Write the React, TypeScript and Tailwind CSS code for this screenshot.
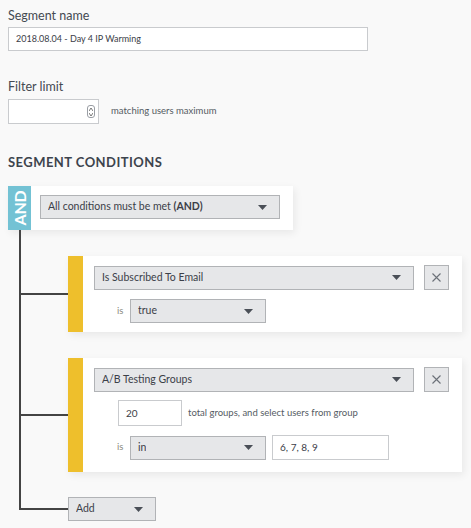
import React from 'react';

const font = { fontFamily: 'Lato, "Open Sans", sans-serif' };

const Caret: React.FC = () => (
  <svg width="9" height="5" viewBox="0 0 9 5" className="shrink-0">
    <path d="M0 0h9L4.5 5z" fill="#4a4f57" />
  </svg>
);

interface SelectProps {
  value: React.ReactNode;
  className?: string;
}

const Select: React.FC<SelectProps> = ({ value, className = '' }) => (
  <div
    className={`flex items-center justify-between h-[24px] bg-[#e6e7e9] border border-[#b1b3b6] pl-[7px] pr-[12px] text-[10.5px] text-[#3b4048] ${className}`}
  >
    <span className="truncate">{value}</span>
    <Caret />
  </div>
);

const RemoveButton: React.FC = () => (
  <div className="w-[25px] h-[25px] flex items-center justify-center bg-[#e6e7e9] border border-[#b1b3b6] shrink-0">
    <svg width="9" height="9" viewBox="0 0 9 9">
      <path d="M0.5 0.5l8 8M8.5 0.5l-8 8" stroke="#6b7078" strokeWidth="1.1" />
    </svg>
  </div>
);

const Connector: React.FC = () => <div className="w-[47px] h-[2px] bg-[#444] self-center shrink-0" />;

const ConditionCard: React.FC<{ children: React.ReactNode; h: string }> = ({ children, h }) => (
  <div className={`flex w-[394px] ${h} bg-white shadow-[2px_3px_8px_rgba(0,0,0,0.07)]`}>
    <div className="w-[15px] bg-[#eebf2c] shrink-0" />
    <div className="flex-1 pl-[11px] pr-[13px] pt-[9px]">{children}</div>
  </div>
);

export default function App() {
  return (
    <div className="min-h-screen w-full bg-[#f9f9f9] px-2 pt-[7px] pb-4 text-[#3b4048]" style={font}>
      <label className="block text-[12.5px] leading-[18px] text-[#444a52]">Segment name</label>
      <div className="mt-[2px] w-[360px] h-[24px] bg-white border border-[#c9cbce] flex items-center pl-[7px] text-[9px] text-[#3b4048]">
        2018.08.04 - Day 4 IP Warming
      </div>

      <label className="block mt-[27px] text-[12.5px] leading-[18px] text-[#444a52]">Filter limit</label>
      <div className="mt-[3px] flex items-center">
        <div className="w-[91px] h-[25px] bg-white border border-[#c9cbce] flex items-center justify-end pr-[3px]">
          <div className="w-[8px] h-[13px] rounded-[3px] border border-[#9a9ea4] flex flex-col items-center justify-center gap-[2px]">
            <svg width="4" height="3" viewBox="0 0 4 3"><path d="M0 3L2 0l2 3" fill="none" stroke="#555" strokeWidth="0.8" /></svg>
            <svg width="4" height="3" viewBox="0 0 4 3"><path d="M0 0l2 3 2-3" fill="none" stroke="#555" strokeWidth="0.8" /></svg>
          </div>
        </div>
        <span className="ml-[12px] text-[9.5px] text-[#555b63]">matching users maximum</span>
      </div>

      <h2 className="mt-[30px] text-[13px] leading-[16px] font-bold tracking-[0.45px] text-[#3d444d]">SEGMENT CONDITIONS</h2>

      <div className="mt-[16px] flex w-[285px] h-[44px] bg-white shadow-[2px_3px_8px_rgba(0,0,0,0.07)]">
        <div className="w-[23px] bg-[#73c2d4] flex items-center justify-center shrink-0 overflow-hidden">
          <span className="-rotate-90 text-white font-bold text-[16px] leading-none tracking-[-0.2px]">AND</span>
        </div>
        <div className="pl-[9px] pt-[9px]">
          <Select
            className="w-[240px]"
            value={
              <>
                All conditions must be met <b>(AND)</b>
              </>
            }
          />
        </div>
      </div>

      <div className="ml-[11px] border-l-2 border-[#444] pt-[26px] flex flex-col gap-[26px]">
        <div className="flex">
          <Connector />
          <ConditionCard h="h-[76px]">
            <div className="flex items-center gap-[10px]">
              <Select className="w-[320px]" value="Is Subscribed To Email" />
              <RemoveButton />
            </div>
            <div className="mt-[9px] flex items-center pl-[23px]">
              <span className="w-[13px] text-[9.5px] text-[#8a8a80]">is</span>
              <Select className="w-[136px]" value="true" />
            </div>
          </ConditionCard>
        </div>

        <div className="flex">
          <Connector />
          <ConditionCard h="h-[114px]">
            <div className="flex items-center gap-[10px]">
              <Select className="w-[320px]" value="A/B Testing Groups" />
              <RemoveButton />
            </div>
            <div className="mt-[8px] flex items-center pl-[24px]">
              <div className="w-[64px] h-[26px] bg-white border border-[#c9cbce] flex items-center pl-[7px] text-[10px]">20</div>
              <span className="ml-[6px] text-[9.5px] text-[#555b63]">total groups, and select users from group</span>
            </div>
            <div className="mt-[9px] flex items-center pl-[23px]">
              <span className="w-[13px] text-[9.5px] text-[#8a8a80]">is</span>
              <Select className="w-[136px]" value="in" />
              <div className="ml-[6px] w-[117px] h-[25px] bg-white border border-[#c9cbce] flex items-center pl-[7px] text-[10px]">
                6, 7, 8, 9
              </div>
            </div>
          </ConditionCard>
        </div>
      </div>

      <div className="ml-[11px] flex items-start">
        <div className="w-[49px] h-[38px] border-l-2 border-b-2 border-[#444]" />
        <Select className="mt-[25px] w-[88px]" value="Add" />
      </div>
    </div>
  );
}
